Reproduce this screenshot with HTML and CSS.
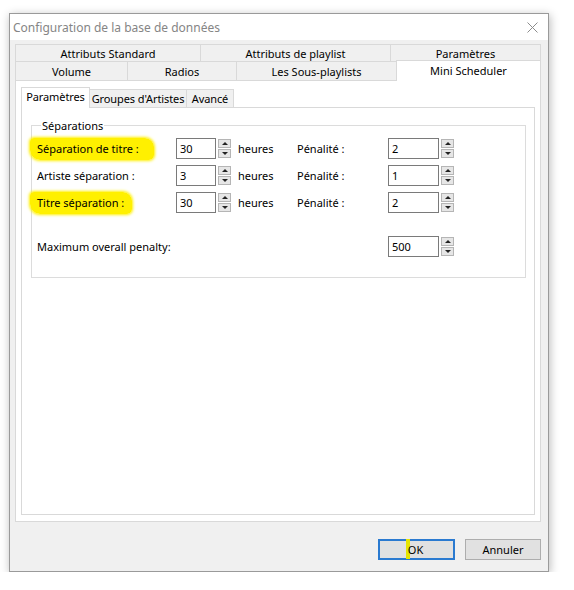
FILE: index.html
```html
<!DOCTYPE html>
<html lang="fr">
<head>
  <meta charset="UTF-8" />
  <title>Configuration de la base de données</title>
  <link rel="stylesheet" href="styles.css">
</head>
<body>
  <div class="window">
    <div class="titlebar">
      <span class="title">Configuration de la base de données</span>
      <svg class="close" width="11" height="11" viewBox="0 0 11 11">
        <path d="M0.5 0.5 L10.5 10.5 M10.5 0.5 L0.5 10.5" stroke="#8c8c8c" stroke-width="1" fill="none"/>
      </svg>
    </div>

    <div class="client">
      <div class="tabs">
        <div class="tab-row back">
          <div class="tab w185">Attributs Standard</div>
          <div class="tab w190">Attributs de playlist</div>
          <div class="tab w151">Paramètres</div>
        </div>
        <div class="tab-row front">
          <div class="tab w112">Volume</div>
          <div class="tab w109">Radios</div>
          <div class="tab w160">Les Sous-playlists</div>
          <div class="tab w145 active">Mini Scheduler</div>
        </div>
      </div>

      <div class="page">
        <div class="subtabs">
          <div class="subtab w69 active">Paramètres</div>
          <div class="subtab w98">Groupes d'Artistes</div>
          <div class="subtab w48">Avancé</div>
        </div>

        <div class="subpage">
          <fieldset class="group">
            <legend>Séparations</legend>

            <div class="grid">
              <span class="label"><span class="mark m1">Séparation de titre :</span></span>
              <div class="spin"><input class="num" value="30"><span class="arrows"><i class="up"></i><i class="down"></i></span></div>
              <span class="unit">heures</span>
              <span class="plabel">Pénalité :</span>
              <div class="spin"><input class="num wide" value="2"><span class="arrows"><i class="up"></i><i class="down"></i></span></div>

              <span class="label">Artiste séparation :</span>
              <div class="spin"><input class="num" value="3"><span class="arrows"><i class="up"></i><i class="down"></i></span></div>
              <span class="unit">heures</span>
              <span class="plabel">Pénalité :</span>
              <div class="spin"><input class="num wide" value="1"><span class="arrows"><i class="up"></i><i class="down"></i></span></div>

              <span class="label"><span class="mark m3">Titre séparation :</span></span>
              <div class="spin"><input class="num" value="30"><span class="arrows"><i class="up"></i><i class="down"></i></span></div>
              <span class="unit">heures</span>
              <span class="plabel">Pénalité :</span>
              <div class="spin"><input class="num wide" value="2"><span class="arrows"><i class="up"></i><i class="down"></i></span></div>
            </div>

            <div class="max-row">
              <span class="max-label">Maximum overall penalty:</span>
              <div class="spin"><input class="num wide" value="500"><span class="arrows"><i class="up"></i><i class="down"></i></span></div>
            </div>
          </fieldset>
        </div>
      </div>

      <div class="buttons">
        <button class="btn default"><span class="ok-mark">OK</span></button>
        <button class="btn">Annuler</button>
      </div>
    </div>
  </div>
</body>
</html>
```

FILE: styles.css
```css
body {
  margin: 0;
  background: #fff;
  font-family: "Noto Sans", "Open Sans", sans-serif;
  font-size: 11px;
  color: #000;
}

.window {
  margin: 13px 0 0 9px;
  width: 538px;
  height: 557px;
  border: 1px solid #9a9a9a;
  background: #f0f0f0;
  box-shadow: 1px 2px 9px rgba(0, 0, 0, 0.28);
  display: flex;
  flex-direction: column;
}

.titlebar {
  height: 26px;
  background: #fff;
  display: flex;
  align-items: center;
  justify-content: space-between;
  padding: 0 10px 0 3px;
}

.title {
  font-size: 12px;
  color: #858585;
}

.close {
  margin-top: 1px;
}

.client {
  flex: 1;
  padding: 4px 7px 0 5px;
  display: flex;
  flex-direction: column;
}

/* outer two-row tab strip */
.tabs {
  display: flex;
  flex-direction: column;
}

.tab-row {
  display: flex;
  align-items: flex-end;
}

.tab {
  box-sizing: border-box;
  text-align: center;
  background: #f0f0f0;
  border: 1px solid #d9d9d9;
  border-bottom: none;
  margin-right: -1px;
}

.tab:last-child {
  margin-right: 0;
}

.back .tab {
  height: 17px;
  line-height: 17px;
}

.front .tab {
  height: 19px;
  line-height: 20px;
}

.front .tab.active {
  height: 21px;
  line-height: 19px;
  background: #fff;
  margin-top: -2px;
  margin-bottom: -1px;
  position: relative;
  z-index: 1;
}

.w185 { width: 186px; }
.w190 { width: 191px; }
.w151 { width: 151px; }
.w112 { width: 113px; }
.w109 { width: 110px; }
.w160 { width: 161px; }
.w145 { width: 145px; }
.w69 { width: 69px; }
.w98 { width: 98px; }
.w48 { width: 48px; }

.page {
  box-sizing: border-box;
  height: 442px;
  background: #fff;
  border: 1px solid #d9d9d9;
  padding: 6px 5px 6px 5px;
  display: flex;
  flex-direction: column;
}

/* inner tab strip */
.subtabs {
  display: flex;
  align-items: flex-end;
  height: 20px;
}

.subtab {
  box-sizing: border-box;
  height: 18px;
  line-height: 17px;
  text-align: center;
  background: #f0f0f0;
  border: 1px solid #d9d9d9;
  border-bottom: none;
  margin-right: -1px;
  letter-spacing: -0.1px;
}

.subtab.active {
  height: 21px;
  line-height: 18px;
  background: #fff;
  margin-bottom: -1px;
  position: relative;
  z-index: 1;
}

.subpage {
  flex: 1;
  border: 1px solid #d9d9d9;
  background: #fff;
  padding: 10px 8px 0 9px;
}

.group {
  margin: 0;
  border: 1px solid #dcdcdc;
  padding: 2px 0 0 5px;
  height: 156px;
}

.group legend {
  padding: 0 1px;
  margin-left: 4px;
}

.grid {
  display: grid;
  grid-template-columns: 139px 62px 59px 91px auto;
  grid-auto-rows: 27px;
  align-items: center;
}

.label,
.plabel,
.unit,
.max-label {
  white-space: nowrap;
}

.mark {
  background: #fff000;
  border-radius: 4px 9px 5px 10px;
  box-shadow: 0 0 3px 1px #fff000;
  margin-left: -7px;
  padding: 3px 6px 4px 7px;
}

.m1 { padding-right: 15px; }
.m3 { padding-right: 8px; }

.spin {
  display: flex;
  align-items: center;
  gap: 2px;
}

.num {
  box-sizing: border-box;
  width: 40px;
  height: 21px;
  border: 1px solid #7a7a7a;
  padding: 0 3px;
  font: inherit;
  color: #000;
  background: #fff;
}

.num.wide {
  width: 51px;
}

.arrows {
  display: flex;
  flex-direction: column;
  gap: 1px;
}

.arrows i {
  box-sizing: border-box;
  width: 13px;
  height: 9px;
  background: #e6e6e6;
  border: 1px solid #b5b5b5;
  display: flex;
  align-items: center;
  justify-content: center;
}

.arrows i::after {
  content: "";
  border-left: 3px solid transparent;
  border-right: 3px solid transparent;
}

.arrows .up::after {
  border-bottom: 3px solid #222;
}

.arrows .down::after {
  border-top: 3px solid #222;
}

.max-row {
  display: flex;
  align-items: center;
  margin-top: 20px;
  height: 21px;
}

.max-label {
  width: 351px;
}

.buttons {
  display: flex;
  justify-content: flex-end;
  gap: 10px;
  margin-top: 17px;
}

.btn {
  box-sizing: border-box;
  width: 76px;
  height: 21px;
  background: #e1e1e1;
  border: 1px solid #adadad;
  font: inherit;
  color: #000;
  padding: 0;
}

.btn.default {
  width: 77px;
  border: 2px solid #2a7ad0;
}

.ok-mark {
  box-shadow: inset 4px 0 0 #e5e500;
  padding: 3px 0 2px 2px;
  margin-left: -4px;
}
```
